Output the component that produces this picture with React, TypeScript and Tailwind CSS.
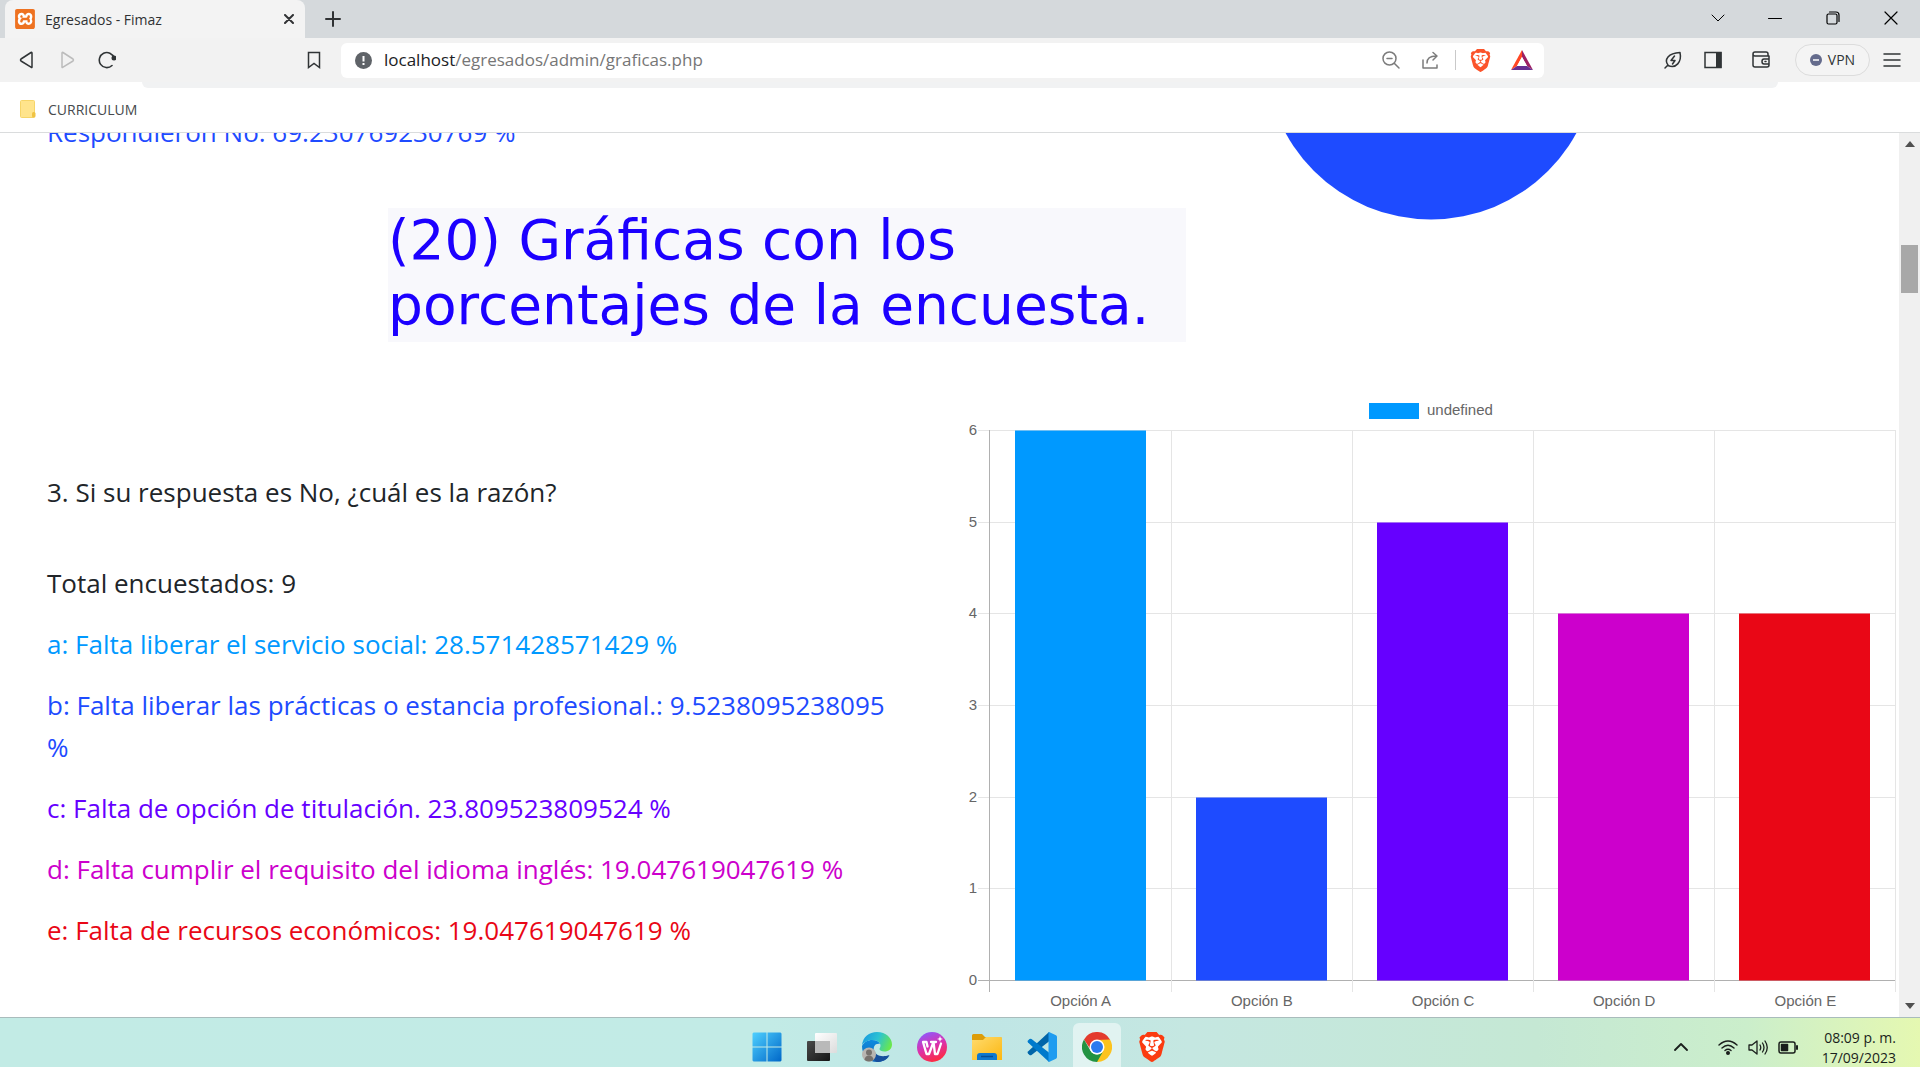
import React from "react";
import { SiBrave, SiXampp } from "react-icons/si";

const bars = [
  { name: "Opción A", value: 6, color: "#0099ff" },
  { name: "Opción B", value: 2, color: "#1e4bff" },
  { name: "Opción C", value: 5, color: "#6600ff" },
  { name: "Opción D", value: 4, color: "#cc00cc" },
  { name: "Opción E", value: 4, color: "#e90716" },
];

function Stroke({ size = 20, width = 1.5, children, box = 20 }: { size?: number; width?: number; box?: number; children: React.ReactNode }) {
  return (
    <svg width={size} height={size} viewBox={`0 0 ${box} ${box}`} fill="none" stroke="currentColor" strokeWidth={width} strokeLinecap="round" strokeLinejoin="round">
      {children}
    </svg>
  );
}

function IconButton({ label, className = "", children }: { label: string; className?: string; children: React.ReactNode }) {
  return (
    <button type="button" aria-label={label} className={`flex h-8 w-10 shrink-0 items-center justify-center ${className}`}>
      {children}
    </button>
  );
}

function TabStrip() {
  return (
    <div className="flex h-[38px] shrink-0 bg-[#d5d9dc] pl-[5px] text-[#303234]">
      <div className="flex w-[300px] items-center rounded-t-lg bg-[#f3f3f3] pl-2.5">
        <span className="flex size-5 items-center justify-center rounded-[3px] bg-white">
          <SiXampp size={20} color="#ee7221" />
        </span>
        <span className="ml-2.5 flex-1 text-[14px]">Egresados - Fimaz</span>
        <button type="button" aria-label="Cerrar pestaña" className="flex size-8 items-center justify-center">
          <Stroke size={10} width={2} box={10}><path d="M1 1l8 8M9 1l-8 8" /></Stroke>
        </button>
      </div>
      <IconButton label="Nueva pestaña" className="ml-2 mt-[3px]">
        <Stroke size={16} width={2} box={16}><path d="M8 1v14M1 8h14" /></Stroke>
      </IconButton>
      <div className="ml-auto flex h-9 items-center text-black">
        <IconButton label="Buscar pestañas" className="w-14"><Stroke width={1}><path d="M4 7l6 6 6-6" /></Stroke></IconButton>
        <IconButton label="Minimizar" className="w-[58px]"><Stroke size={14} box={14} width={1}><path d="M0.5 7.5h13" /></Stroke></IconButton>
        <IconButton label="Restaurar" className="w-[58px]">
          <Stroke size={14} box={14} width={1.2}><rect x="1" y="3" width="10" height="10" rx="1.5" /><path d="M3.500 1h6.500a3 3 0 0 1 3 3v6.500" /></Stroke>
        </IconButton>
        <IconButton label="Cerrar" className="w-[58px]"><Stroke size={14} box={14} width={1.2}><path d="M1 1l12 12M13 1L1 13" /></Stroke></IconButton>
      </div>
    </div>
  );
}

function BatLogo() {
  return (
    <svg width="22" height="20" viewBox="0 0 22 20">
      <path d="M11 0L0 20l6-4L11 7z" fill="#ff4724" />
      <path d="M11 0l11 20-6-4-5-9z" fill="#9e1f63" />
      <path d="M0 20h22l-6-4H6z" fill="#662d91" />
      <path d="M11 7l5 9H6z" fill="#fff" />
    </svg>
  );
}

function Toolbar() {
  return (
    <div className="flex h-11 shrink-0 items-center bg-[#f2f2f2] pl-[7px] text-[#303436]">
      <IconButton label="Atrás"><Stroke size={18} box={18}><path d="M14 2v14Q14 17 13 16.200L3 10Q2 9 3 8l10-6.500Q14 1 14 2z" /></Stroke></IconButton>
      <IconButton label="Adelante" className="text-[#bcbcbc]"><Stroke size={18} box={18}><path d="M4 2v14q0 1 1 .2L15 10q1-1 0-2L5 1.500Q4 1 4 2z" /></Stroke></IconButton>
      <IconButton label="Recargar">
        <Stroke size={18} box={18} width={1.6}><path d="M14 14.500A7.500 7.500 0 1 1 16 7" /><circle cx="16" cy="7" r="1.700" fill="currentColor" /></Stroke>
      </IconButton>
      <IconButton label="Agregar marcador" className="ml-[167px]">
        <Stroke size={18} box={18}><path d="M3.500 1.500h11v15L9 12.500l-5.500 4z" strokeLinejoin="miter" /></Stroke>
      </IconButton>
      <div className="ml-[7px] flex h-[35px] min-w-0 flex-1 items-center rounded-md bg-white pl-3.5">
        <svg width="17" height="17" viewBox="0 0 17 17"><circle cx="8.500" cy="8.500" r="8.500" fill="#5f6368" /><path d="M8.500 4v5.500M8.500 11v2" stroke="#fff" strokeWidth="2" /></svg>
        <a href="#inicio" className="ml-3 flex-1 text-[17px] text-[#767676]"><span className="text-[#202124]">localhost</span>/egresados/admin/graficas.php</a>
        <div className="flex items-center text-[#7c7c7c]">
          <IconButton label="Zoom"><Stroke><circle cx="8.500" cy="8.500" r="6.500" /><path d="M13.500 13.500L18 18M6 8.500h5" /></Stroke></IconButton>
          <IconButton label="Compartir"><Stroke><path d="M2 10v8h14v-3M6 13c0-5 3-7 9-7M12 2.500L16 6l-4 4" /></Stroke></IconButton>
          <span className="mx-1 h-5 w-px bg-[#c9c9c9]" />
          <IconButton label="Brave Shields"><SiBrave size={23} color="#fb542b" /></IconButton>
          <IconButton label="Brave Rewards" className="ml-0.5 mr-0.5"><BatLogo /></IconButton>
        </div>
      </div>
      <div className="ml-[109px] flex items-center">
        <IconButton label="Rendimiento">
          <Stroke><path d="M2 18l3-3C1 10 5 3 17 2.500C19 12 13 19 5 15.500M11.500 6L8 10.500h4L9.500 14" /></Stroke>
        </IconButton>
        <IconButton label="Panel lateral">
          <svg width="18" height="18" viewBox="0 0 18 18"><rect x="1" y="1.500" width="16" height="15" fill="none" stroke="#303436" strokeWidth="1.500" /><path d="M12 1h5.500v16H12z" fill="#303436" /></svg>
        </IconButton>
        <IconButton label="Cartera" className="ml-2">
          <Stroke size={18} box={18}><path d="M1 3v11q0 2 2 2h12q2 0 2-2V5H3Q1 5 1 3q0-2 2-2h11q2 0 2 2v2M17 8h-5q-2 0-2 2.500T12 13h5M13 10.500h1" /></Stroke>
        </IconButton>
        <button type="button" className="ml-3.5 flex h-8 w-[75px] items-center justify-center gap-1.5 rounded-full border border-[#dcdcdc] bg-[#f4f4f4] text-[14px] leading-5 text-[#303436]">
          <svg width="12" height="12" viewBox="0 0 12 12"><circle cx="6" cy="6" r="6" fill="#646b8c" /><path d="M3 6h6" stroke="#fff" strokeWidth="1.500" /></svg>
          VPN
        </button>
        <IconButton label="Menú" className="ml-0.5 mr-2"><Stroke size={18} box={18}><path d="M1 3h16M1 9h16M1 15h16" /></Stroke></IconButton>
      </div>
    </div>
  );
}

function BookmarkBar() {
  return (
    <div className="h-[51px] shrink-0 border-b border-[#dadcdd] bg-white">
      <div className="ml-[142px] mr-[142px] h-1.5 rounded-b-xl bg-[#f1f2f3]" />
      <a href="#curriculum" className="flex h-[42px] w-fit items-center gap-3 pl-5 text-[14px] text-[#474a4d]">
        <svg width="16" height="18" viewBox="0 0 16 18"><rect x="0.500" y="0.500" width="14" height="17" rx="1" fill="#ffe48c" stroke="#f6d569" /><rect x="12" y="12" width="3.500" height="5.500" rx="1.500" fill="#f0c343" /></svg>
        CURRICULUM
      </a>
    </div>
  );
}

const plot = { left: 30, top: 35, right: 936, bottom: 585 };
const column = (plot.right - plot.left) / bars.length;

function BarChart() {
  const y = (value: number) => Math.round(plot.bottom - (value * (plot.bottom - plot.top)) / 6) + 0.5;
  return (
    <svg viewBox="0 0 939 621" className="block w-full font-['Liberation_Sans',Arial,sans-serif] text-[15px]" role="img" aria-label="Gráfica de barras">
      <rect x="409" y="8" width="50" height="16" fill="#0099ff" />
      <text x="467" y="20" fill="#666666">undefined</text>
      {[0, 1, 2, 3, 4, 5, 6].map((value) => (
        <g key={value}>
          <path d={`M18 ${y(value)}H${plot.right}`} stroke={value === 0 ? "#b0b0b0" : "#e5e5e5"} />
          <text x="17" y={y(value) + 4} textAnchor="end" fill="#666666">{value}</text>
        </g>
      ))}
      {[0, 1, 2, 3, 4, 5].map((line) => (
        <path key={line} d={`M${Math.floor(plot.left + line * column) + (line % 5 ? 0.5 : -0.5)} ${plot.top}V${plot.bottom + 12}`} stroke={line === 0 ? "#b0b0b0" : "#e5e5e5"} />
      ))}
      {bars.map((bar, i) => {
        const center = plot.left + column * (i + 0.5);
        return (
          <g key={bar.name}>
            <rect x={Math.round(center - 66)} y={y(bar.value)} width="131" height={y(0) - y(bar.value)} fill={bar.color} />
            <text x={center} y="611" textAnchor="middle" fill="#666666">{bar.name}</text>
          </g>
        );
      })}
    </svg>
  );
}

function Scrollbar() {
  return (
    <div className="flex w-[21px] shrink-0 flex-col items-center justify-between bg-[#f0f0f0] py-2">
      <svg width="10" height="6" viewBox="0 0 10 6"><path d="M0 6l5-6 5 6z" fill="#505050" /></svg>
      <div className="mb-auto mt-[98px] h-12 w-[17px] bg-[#a8a8a8]" />
      <svg width="10" height="6" viewBox="0 0 10 6"><path d="M0 0h10L5 6z" fill="#505050" /></svg>
    </div>
  );
}

function Page() {
  return (
    <main className="flex min-h-0 flex-1 overflow-hidden bg-white">
      <div className="min-w-0 flex-1">
        <div className="flex">
          <div className="w-[1186px] shrink-0 pl-[47px]">
            <p className="-mt-[22px] text-[26px] leading-[42px] text-[#1e4bff]">Respondieron No: 69.230769230769 %</p>
            <h1 className="ml-[341px] mt-[55px] bg-[#f8f8fc] pb-1 font-['DejaVu_Sans',sans-serif] text-[55px] font-normal leading-[65px] text-[#1c00ff]">
              (20) Gráficas con los porcentajes de la encuesta.
            </h1>
          </div>
          <svg width="332" height="87" viewBox="0 0 332 87" className="ml-[79px] shrink-0"><circle cx="166" cy="-79" r="165.500" fill="#1e4bff" /></svg>
        </div>
        <div className="mt-[53px] flex">
          <section className="flex min-w-0 flex-1 flex-col gap-[19px] pl-[47px] pr-[60px] pt-[76px] text-[26px] leading-[42px] text-[#212529]">
            <h2 className="mb-[30px]">3. Si su respuesta es No, ¿cuál es la razón?</h2>
            <p>Total encuestados: 9</p>
            <p className="text-[#0099ff]">a: Falta liberar el servicio social: 28.571428571429 %</p>
            <p className="text-[#1e4bff]">b: Falta liberar las prácticas o estancia profesional.: 9.5238095238095 %</p>
            <p className="text-[#6600ff]">c: Falta de opción de titulación. 23.809523809524 %</p>
            <p className="text-[#cc00cc]">d: Falta cumplir el requisito del idioma inglés: 19.047619047619 %</p>
            <p className="text-[#e90716]">e: Falta de recursos económicos: 19.047619047619 %</p>
          </section>
          <div className="w-[939px] shrink-0"><BarChart /></div>
        </div>
      </div>
      <Scrollbar />
    </main>
  );
}

const WindowsIcon = () => (
  <svg width="30" height="30" viewBox="0 0 30 30">
    <defs><linearGradient id="win" x1="0" y1="0" x2="1" y2="1"><stop stopColor="#4fd0ff" /><stop offset="1" stopColor="#0067c8" /></linearGradient></defs>
    <path d="M1.500 .5H14.500V14.500H.5V1.500zM15.500 .5H28.500L29.500 1.500V14.500H15.500zM.5 15.500H14.500V29.500H1.500L.5 28.500zM15.500 15.500H29.500V28.500L28.500 29.500H15.500z" fill="url(#win)" />
  </svg>
);
const TaskViewIcon = () => (
  <svg width="30" height="30" viewBox="0 0 30 30">
    <defs>
      <linearGradient id="tv1" x1="0" y1="0" x2="1" y2="1"><stop stopColor="#4a4a4a" /><stop offset="1" stopColor="#151515" /></linearGradient>
      <linearGradient id="tv2" x1="0" y1="0" x2="1" y2="1"><stop stopColor="#fff" /><stop offset="1" stopColor="#dcdcdc" /></linearGradient>
    </defs>
    <rect y="9" width="23" height="20" rx="1" fill="url(#tv1)" />
    <rect x="8" y="1" width="22" height="20" rx="1" fill="url(#tv2)" />
    <path d="M8 9h15v12H8z" fill="#b9b9b9" />
  </svg>
);
const EdgeIcon = () => (
  <svg width="30" height="30" viewBox="0 0 30 30">
    <defs>
      <linearGradient id="ed1" x1="0" y1=".3" x2="1" y2=".6"><stop stopColor="#1a9be0" /><stop offset=".5" stopColor="#2cc3d2" /><stop offset="1" stopColor="#6be84a" /></linearGradient>
      <linearGradient id="ed2" x1="0" y1="0" x2="0" y2="1"><stop stopColor="#0c8be0" /><stop offset="1" stopColor="#1367b8" /></linearGradient>
    </defs>
    <path d="M0 13C1 5 7 0 15 0c9 0 15 6 15 12.500 0 4.500-3.500 7-7.500 7-3 0-5-1-5-2.500 0-1 1-1.500 1-3.500 0-3-3-5.500-8-5.500C6 8 2 10 0 13z" fill="url(#ed1)" />
    <path d="M0 14C2 10 6 8 10 8c4 0 7 1.500 8 4-5-1-7 3-6 7 1.200 5 6 7.500 10 7 2 0 4-1 5.500-2C24 28 20 30 15 30 6 30 0 23 0 14z" fill="url(#ed2)" />
    <path d="M12 18c1 5 7 8 15.500 5C25 28 20 30 15 30c-4-1-6-8-3-12z" fill="#174f9c" />
    <circle cx="7" cy="22.500" r="7" fill="#b9b5b1" />
    <circle cx="7" cy="20.500" r="3" fill="#77716d" />
    <path d="M2.500 28a4.500 4.500 0 0 1 9 0q-4.500 3-9 0z" fill="#77716d" />
  </svg>
);
const WpsIcon = () => (
  <svg width="30" height="30" viewBox="0 0 30 30">
    <defs><linearGradient id="wps" x1=".2" y1="0" x2=".6" y2="1"><stop stopColor="#8a5cff" /><stop offset=".5" stopColor="#d932b0" /><stop offset="1" stopColor="#ff2b3e" /></linearGradient></defs>
    <circle cx="15" cy="15" r="15" fill="url(#wps)" />
    <path d="M10.500 14.500l-1-4.500H6l3.500 12h2.500L16.500 10l1.500 12h2.500L24 11.500M14 10h5" fill="none" stroke="#fff" strokeWidth="2.300" strokeLinejoin="round" strokeLinecap="round" />
    <path d="M23 4l.8 2.200L26 7l-2.200.8L23 10l-.8-2.200L20 7l2.200-.8z" fill="#fff" />
  </svg>
);
const FolderIcon = () => (
  <svg width="30" height="30" viewBox="0 0 30 30">
    <defs><linearGradient id="fold" x1="0" y1="0" x2="1" y2="1"><stop stopColor="#ffdb6e" /><stop offset="1" stopColor="#fcb711" /></linearGradient></defs>
    <path d="M0 3.500Q0 2 1.500 2H10l3 3h15q2 0 2 2v3H0z" fill="#dd9d09" />
    <path d="M0 8h11l3-3h14.500Q30 5 30 6.500V28H0z" fill="url(#fold)" />
    <path d="M5 28v-4q0-3 3-3h14q3 0 3 3v4z" fill="#0f78cf" />
    <path d="M9 24.500h12" stroke="#074f96" strokeWidth="1.500" />
  </svg>
);
const CodeIcon = () => (
  <svg width="30" height="30" viewBox="0 0 30 30">
    <path d="M22 0L1 19.500Q0 20.500 1 21.500L2.500 23q1 .7 2 0L22.500 9z" fill="#0065a9" />
    <path d="M22 30L1 10.500Q0 9.500 1 8.500L2.500 7q1-.7 2 0L22.500 21z" fill="#007acc" />
    <path d="M22 0l7 3.200q1 .6 1 1.800v20q0 1.200-1 1.800L22 30q-.5-.3-.5-1V1q0-.7.5-1z" fill="#1f9cf0" />
  </svg>
);
const ChromeIcon = () => (
  <svg width="30" height="30" viewBox="0 0 30 30">
    <path d="M2 7.500a15 15 0 0 1 26 0L27 10H15L9 18z" fill="#e33b2e" />
    <path d="M28 7.500A15 15 0 0 1 15 30l-1-4 6-9-5-9z" fill="#fcc31e" />
    <path d="M2 7.500A15 15 0 0 0 15 30l6.500-11.200A7.500 7.500 0 0 1 8.500 18.800z" fill="#229342" />
    <circle cx="15" cy="15" r="7.500" fill="#fff" /><circle cx="15" cy="15" r="6" fill="#2a7af0" />
  </svg>
);
const BraveIcon = () => (
  <svg width="30" height="30" viewBox="0 0 30 30">
    <path d="M8 4h14l3 6-3 12-7 5-7-5L5 10z" fill="#fff" />
    <SiBrave size={30} color="#fb3b10" />
  </svg>
);

const apps = [
  { name: "Inicio", Icon: WindowsIcon },
  { name: "Vista de tareas", Icon: TaskViewIcon },
  { name: "Edge", Icon: EdgeIcon },
  { name: "WPS Office", Icon: WpsIcon },
  { name: "Explorador de archivos", Icon: FolderIcon },
  { name: "Visual Studio Code", Icon: CodeIcon },
  { name: "Chrome", Icon: ChromeIcon, active: true },
  { name: "Brave", Icon: BraveIcon },
];

function Taskbar() {
  return (
    <footer className="grid h-[50px] shrink-0 grid-cols-[1fr_auto_1fr] overflow-hidden border-t border-[#a9bcbc] bg-[linear-gradient(90deg,#c2ebe5_0%,#c2ebe6_40%,#bfe6e6_50%,#c5e7e1_62%,#c5e8d4_80%,#cbeecb_91%,#e5f8b1_100%)]">
      <span />
      <nav className="flex gap-[7px] pr-0.5">
        {apps.map(({ name, Icon, active }) => (
          <button key={name} type="button" aria-label={name} className={active ? "mt-[5px] flex h-12 w-12 justify-center rounded-t-md bg-white/50 pt-[9px]" : "mt-[5px] flex h-12 w-12 justify-center pt-[9px]"}>
            <Icon />
          </button>
        ))}
      </nav>
      <div className="flex items-start justify-end pr-6 pt-[19px] text-[#1a1f1c]">
        <button type="button" aria-label="Iconos ocultos" className="mr-[30px] flex h-5 items-center"><Stroke size={14} box={14} width={1.8}><path d="M1 10l6-6 6 6" /></Stroke></button>
        <button type="button" aria-label="Red y sonido" className="flex h-5 items-center gap-2.5">
          <Stroke width={1.4}><path d="M1 8q9-8 18 0M4 11q6-5.500 12 0M7 13.500q3-2.500 6 0" /><circle cx="10" cy="16" r="1.300" fill="currentColor" /></Stroke>
          <Stroke width={1.3}><path d="M1 8v5h3l5 4V4L4 8zM12 8q1.500 2.500 0 5M14.500 6q3 4.500 0 9M17 4q4.500 6.500 0 13" /></Stroke>
          <Stroke width={1.5}><rect x="1" y="5" width="16" height="11" rx="2" /><rect x="3.500" y="7.500" width="6" height="6" fill="currentColor" /><path d="M19 9v3" strokeWidth="2" /></Stroke>
        </button>
        <p className="-mt-[9px] ml-6 text-right text-[14px] leading-5">08:09 p. m.<br />17/09/2023</p>
      </div>
    </footer>
  );
}

export default function App() {
  return (
    <div className="flex h-screen flex-col overflow-hidden font-['Open_Sans','Noto_Sans',sans-serif]">
      <TabStrip />
      <Toolbar />
      <BookmarkBar />
      <Page />
      <Taskbar />
    </div>
  );
}
